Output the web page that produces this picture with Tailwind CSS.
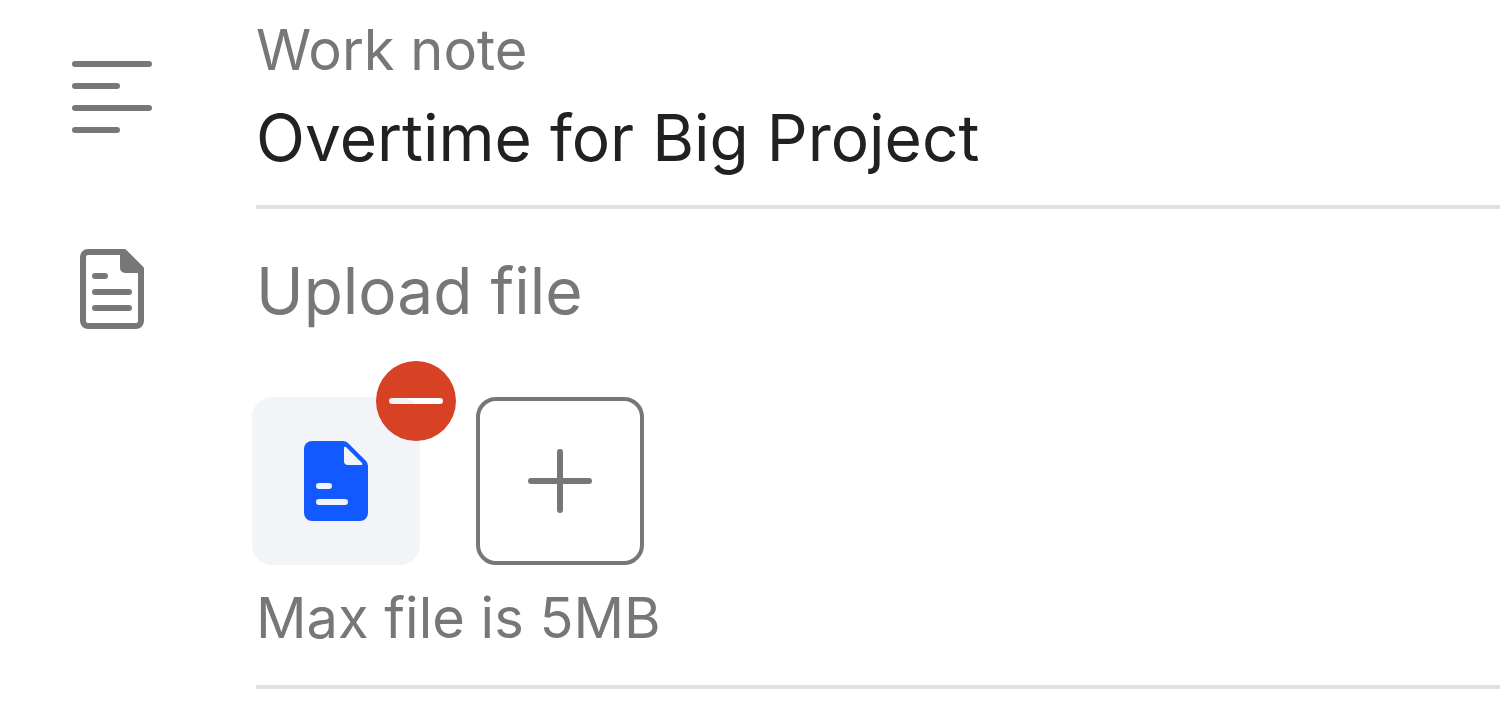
<!DOCTYPE html>
<html lang="en">
<head>
    <meta charset="UTF-8">
    <meta name="viewport" content="width=device-width, initial-scale=1.0">
    <title>Overtime request</title>
    <script src="https://cdn.jsdelivr.net/npm/@tailwindcss/browser@4"></script>
</head>
<body class="bg-white font-['Inter',sans-serif] text-[#777777]">
    <form class="pl-16 pr-2">
        <!-- Work note -->
        <div class="flex">
            <div class="w-48 shrink-0 pt-[49px]">
                <svg class="w-24 h-24" viewBox="0 0 96 96" fill="none" stroke="currentColor" stroke-width="6" stroke-linecap="round">
                    <path d="M11 15h74M11 37h42M11 59h74M11 81h42"/>
                </svg>
            </div>
            <div class="flex-1 min-w-0 pt-4 pb-[27px] border-b-4 border-[#e1e1e1]">
                <label for="workNote" class="block text-[56px] leading-[68px]">Work note</label>
                <input id="workNote" type="text" value="Overtime for Big Project" class="block w-full h-20 mt-[14px] text-[64px] leading-[80px] text-[#212121] outline-none">
            </div>
        </div>

        <!-- Upload file -->
        <div class="flex">
            <div class="w-48 shrink-0 pt-8">
                <svg class="w-24 h-24" viewBox="0 0 96 96" fill="none" stroke="currentColor" stroke-width="6" stroke-linecap="round" stroke-linejoin="round">
                    <path d="M24 11h36l17 17v52a5 5 0 0 1-5 5H24a5 5 0 0 1-5-5V16a5 5 0 0 1 5-5z"/>
                    <path d="M56 8h5l19 19v5H61a5 5 0 0 1-5-5z" fill="currentColor" stroke="none"/>
                    <path d="M31 35h10M31 51h34M31 67h34"/>
                </svg>
            </div>
            <div class="flex-1 min-w-0 pt-[42px] pb-[33px] border-b-4 border-[#e1e1e1]">
                <h2 class="text-[64px] leading-[80px]">Upload file</h2>
                <div class="flex gap-14 mt-[66px] -ml-1">
                    <div class="relative flex items-center justify-center size-[168px] rounded-[20px] bg-[#f2f4f8]">
                        <svg class="w-16 h-20" viewBox="0 0 64 80">
                            <path d="M8 0h31q3 0 5 2l18 18q2 2 2 5v47a8 8 0 0 1-8 8H8a8 8 0 0 1-8-8V8a8 8 0 0 1 8-8z" fill="#1259ff"/>
                            <path d="M40 7q0-2 2-1l16 16q1 2-1 2H44a4 4 0 0 1-4-4z" fill="#f2f4f8"/>
                            <path d="M15 45h10M15 61h26" stroke="#f2f4f8" stroke-width="6" stroke-linecap="round"/>
                        </svg>
                        <button type="button" aria-label="Remove file" class="absolute -top-9 -right-9 size-20 rounded-full text-[#d74124]">
                            <!-- the bar is cut out of the disc -->
                            <svg class="size-20" viewBox="0 0 80 80" fill="currentColor" fill-rule="evenodd">
                                <path d="M40 0a40 40 0 1 0 0 80a40 40 0 1 0 0-80zM16 37h48a3 3 0 0 1 0 6H16a3 3 0 0 1 0-6z"/>
                            </svg>
                        </button>
                    </div>
                    <button type="button" aria-label="Add file" class="flex items-center justify-center size-[168px] rounded-[20px] border-4 border-[#777777]">
                        <svg class="size-16" viewBox="0 0 64 64" stroke="currentColor" stroke-width="6" stroke-linecap="round">
                            <path d="M3 32h58M32 3v58"/>
                        </svg>
                    </button>
                </div>
                <p class="mt-[19px] text-[56px] leading-[68px]">Max file is 5MB</p>
            </div>
        </div>
    </form>
</body>
</html>
